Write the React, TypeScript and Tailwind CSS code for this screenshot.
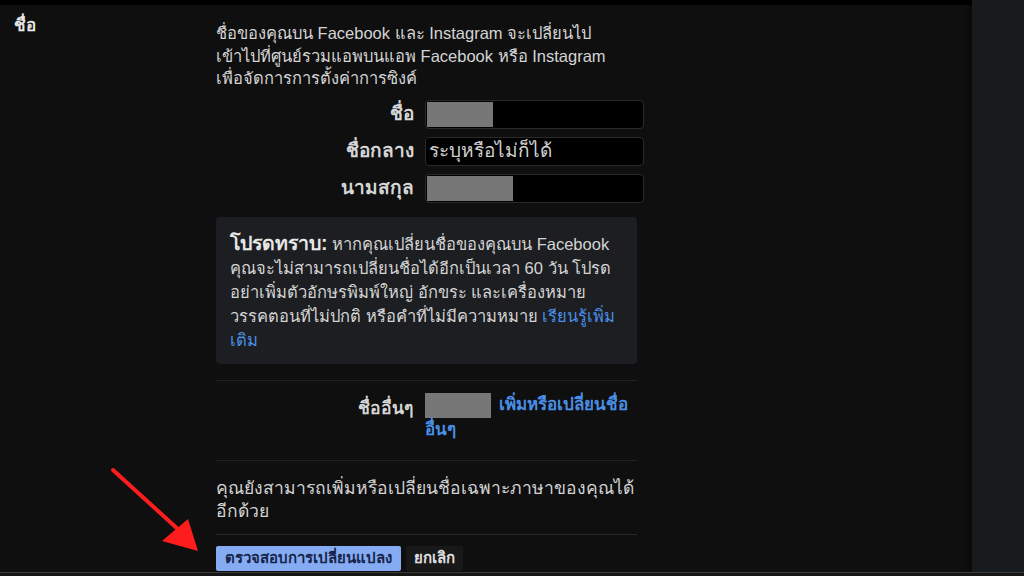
const font = "font-['Liberation_Sans','Noto_Sans',sans-serif]";

function NameField({ label, fill, placeholder }: { label: string; fill?: number; placeholder?: string }) {
  return (
    <div className="flex items-center">
      <div className="w-[209px] shrink-0 text-right text-[19px] font-semibold text-[#d6d6d6] pr-[11px] leading-[24px]">{label}</div>
      <div className="w-[219px] shrink-0 h-[29px] bg-black border border-[#2a2a2a] rounded-[4px] p-[1px] flex items-center">
        {fill ? (
          <div className="h-[25px] bg-[#777777]" style={{ width: fill }} />
        ) : (
          <span className="pl-[2px] text-[19px] leading-[24px] text-[#d0d0d0]">{placeholder}</span>
        )}
      </div>
    </div>
  );
}

export default function App() {
  return (
    <div className={`relative w-[1024px] h-[576px] overflow-hidden bg-[#0f0f0f] flex flex-col ${font}`}>
      <div className="flex flex-1 min-h-0">
        <main className="w-[972px] shrink-0 flex flex-col">
          <div className="h-[5px] bg-black" />
          <div className="flex pt-[10px]">
            {/* section label */}
            <div className="w-[216px] shrink-0 pl-[14px] text-[17px] font-bold text-[#e6e6e6] leading-[22px]">ชื่อ</div>

            <div className="w-[430px] shrink-0 flex flex-col">
              <p className="w-[430px] pt-[7px] text-[16.5px] leading-[22.5px] text-[#d4d4d4] whitespace-nowrap">
                ชื่อของคุณบน Facebook และ Instagram จะเปลี่ยนไป
                <br />
                เข้าไปที่ศูนย์รวมแอพบนแอพ Facebook หรือ Instagram
                <br />
                เพื่อจัดการการตั้งค่าการซิงค์
              </p>

              <div className="mt-[10px] flex flex-col gap-[8px]">
                <NameField label="ชื่อ" fill={66} />
                <NameField label="ชื่อกลาง" placeholder="ระบุหรือไม่ก็ได้" />
                <NameField label="นามสกุล" fill={86} />
              </div>

              {/* notice box */}
              <div className="mt-[14px] w-[421px] bg-[#1c1e22] rounded-[4px] pl-[14px] pt-[14px] pb-[12px] text-[16.5px] leading-[24px] text-[#d4d4d4] whitespace-nowrap">
                <div><span className="font-bold text-[19.5px] text-[#e8e8e8]">โปรดทราบ:</span> หากคุณเปลี่ยนชื่อของคุณบน Facebook</div>
                <div>คุณจะไม่สามารถเปลี่ยนชื่อได้อีกเป็นเวลา 60 วัน โปรด</div>
                <div>อย่าเพิ่มตัวอักษรพิมพ์ใหญ่ อักขระ และเครื่องหมาย</div>
                <div>วรรคตอนที่ไม่ปกติ หรือคำที่ไม่มีความหมาย <span className="text-[#4a8ee6]">เรียนรู้เพิ่ม</span></div>
                <div className="text-[#4a8ee6]">เติม</div>
              </div>

              <div className="mt-[16px] w-[421px] h-px bg-[#222222]" />

              <div className="flex pt-[12px] pb-[18px]">
                <div className="w-[209px] shrink-0 text-right text-[17.5px] font-semibold leading-[24px] text-[#d6d6d6] pr-[12px] pt-[3px]">ชื่ออื่นๆ</div>
                <div className="w-[212px] shrink-0 text-[17px] leading-[24px] text-[#4a8ee6] font-bold whitespace-nowrap">
                  <div className="flex items-center gap-[8px]">
                    <span className="w-[66px] h-[25px] bg-[#777777]" />
                    <span>เพิ่มหรือเปลี่ยนชื่อ</span>
                  </div>
                  <div>อื่นๆ</div>
                </div>
              </div>

              <div className="w-[421px] h-px bg-[#222222]" />

              <div className="pt-[16px] pb-[11px] text-[17.5px] leading-[23px] text-[#d4d4d4] whitespace-nowrap">
                <div>คุณยังสามารถเพิ่มหรือเปลี่ยนชื่อเฉพาะภาษาของคุณได้</div>
                <div>อีกด้วย</div>
              </div>

              <div className="w-[421px] h-px bg-[#2a2a2a]" />

              <div className="flex gap-[5px] pt-[11px]">
                <button className="w-[185px] h-[25px] bg-[#85acf2] text-[15px] font-bold text-[#16244a] rounded-[2px]">ตรวจสอบการเปลี่ยนแปลง</button>
                <button className="w-[57px] h-[25px] bg-[#181818] text-[15px] font-bold text-[#e0e0e0] rounded-[2px]">ยกเลิก</button>
              </div>
            </div>
          </div>
        </main>
        <aside className="flex-1 bg-[#181b1e] shadow-[-3px_0_4px_rgba(0,0,0,0.35)]" />
      </div>
      <div className="h-[4px] border-t border-[#3a3a3a] bg-[#161616]" />

      {/* red annotation arrow */}
      <svg className="absolute left-0 top-0 pointer-events-none" width="1024" height="576">
        <line x1="113" y1="470" x2="180" y2="531" stroke="#ff1c1c" strokeWidth="4" strokeLinecap="round" />
        <polygon points="188,519 162,541 198,551" fill="#ff1c1c" />
      </svg>
    </div>
  );
}
